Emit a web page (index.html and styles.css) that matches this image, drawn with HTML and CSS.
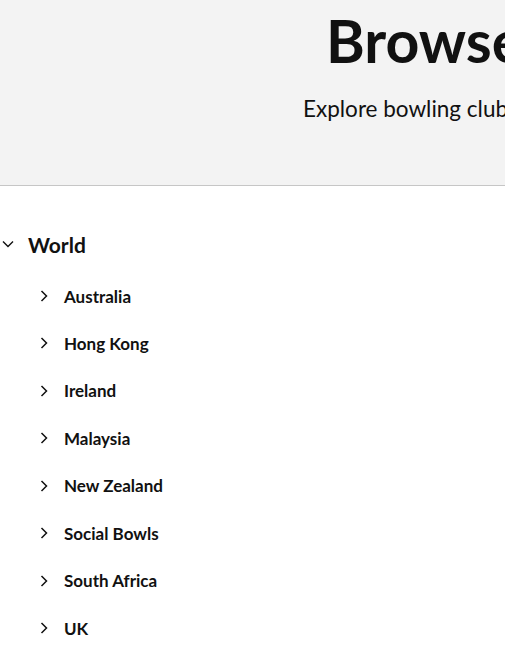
FILE: index.html
```html
<!DOCTYPE html>
<html lang="en">
<head>
<meta charset="utf-8">
<title>Browse Clubs</title>
<link rel="stylesheet" href="styles.css">
</head>
<body>
<header class="hero">
  <div class="hero-inner">
    <h1 class="hero-title">Browse Clubs</h1>
    <p class="hero-sub">Explore bowling clubs around the world</p>
  </div>
</header>
<main class="tree">
  <div class="node node-root">
    <div class="row row-root">
      <svg class="chev chev-down" width="12" height="8" viewBox="0 0 12 8"><polyline points="1,1.5 6,6.5 11,1.5" fill="none" stroke="#111" stroke-width="1.4"/></svg>
      <span class="label-root">World</span>
    </div>
    <ul class="children">
      <li class="row row-child"><svg class="chev" width="8" height="12" viewBox="0 0 8 12"><polyline points="1.5,1 6.5,6 1.5,11" fill="none" stroke="#111" stroke-width="1.5"/></svg><span class="label">Australia</span></li>
      <li class="row row-child"><svg class="chev" width="8" height="12" viewBox="0 0 8 12"><polyline points="1.5,1 6.5,6 1.5,11" fill="none" stroke="#111" stroke-width="1.5"/></svg><span class="label">Hong Kong</span></li>
      <li class="row row-child"><svg class="chev" width="8" height="12" viewBox="0 0 8 12"><polyline points="1.5,1 6.5,6 1.5,11" fill="none" stroke="#111" stroke-width="1.5"/></svg><span class="label">Ireland</span></li>
      <li class="row row-child"><svg class="chev" width="8" height="12" viewBox="0 0 8 12"><polyline points="1.5,1 6.5,6 1.5,11" fill="none" stroke="#111" stroke-width="1.5"/></svg><span class="label">Malaysia</span></li>
      <li class="row row-child"><svg class="chev" width="8" height="12" viewBox="0 0 8 12"><polyline points="1.5,1 6.5,6 1.5,11" fill="none" stroke="#111" stroke-width="1.5"/></svg><span class="label">New Zealand</span></li>
      <li class="row row-child"><svg class="chev" width="8" height="12" viewBox="0 0 8 12"><polyline points="1.5,1 6.5,6 1.5,11" fill="none" stroke="#111" stroke-width="1.5"/></svg><span class="label">Social Bowls</span></li>
      <li class="row row-child"><svg class="chev" width="8" height="12" viewBox="0 0 8 12"><polyline points="1.5,1 6.5,6 1.5,11" fill="none" stroke="#111" stroke-width="1.5"/></svg><span class="label">South Africa</span></li>
      <li class="row row-child"><svg class="chev" width="8" height="12" viewBox="0 0 8 12"><polyline points="1.5,1 6.5,6 1.5,11" fill="none" stroke="#111" stroke-width="1.5"/></svg><span class="label">UK</span></li>
    </ul>
  </div>
</main>
</body>
</html>
```
FILE: styles.css
```css
html, body {
  margin: 0;
  padding: 0;
  background: #ffffff;
  color: #111111;
  font-family: "Lato", "Noto Sans", "Liberation Sans", sans-serif;
  overflow: hidden;
}

.hero {
  background: #f3f3f3;
  border-bottom: 1px solid #c6c6c6;
  height: 185px;
  box-sizing: content-box;
  overflow: hidden;
}

.hero-inner {
  width: 1000px;
  padding-top: 4px;
}

.hero-title {
  margin: 0 0 0 326px;
  font-size: 59px;
  line-height: 74px;
  font-weight: 700;
  white-space: nowrap;
}

.hero-sub {
  margin: 17px 0 0 303px;
  font-size: 22.5px;
  line-height: 28px;
  font-weight: 400;
  white-space: nowrap;
}

.tree {
  padding-top: 42px;
}

.row {
  display: flex;
  align-items: center;
}

.row-root {
  padding-left: 2px;
  gap: 14px;
  height: 32px;
}

.label-root {
  font-size: 21px;
  font-weight: 700;
  white-space: nowrap;
}

.children {
  list-style: none;
  margin: 0;
  padding: 0 0 0 40px;
  display: flex;
  flex-direction: column;
  gap: 23.45px;
  margin-top: 24px;
}

.row-child {
  height: 24px;
  gap: 16px;
}

.label {
  font-size: 17px;
  font-weight: 700;
  white-space: nowrap;
}

.chev {
  flex: none;
  display: block;
}
```
